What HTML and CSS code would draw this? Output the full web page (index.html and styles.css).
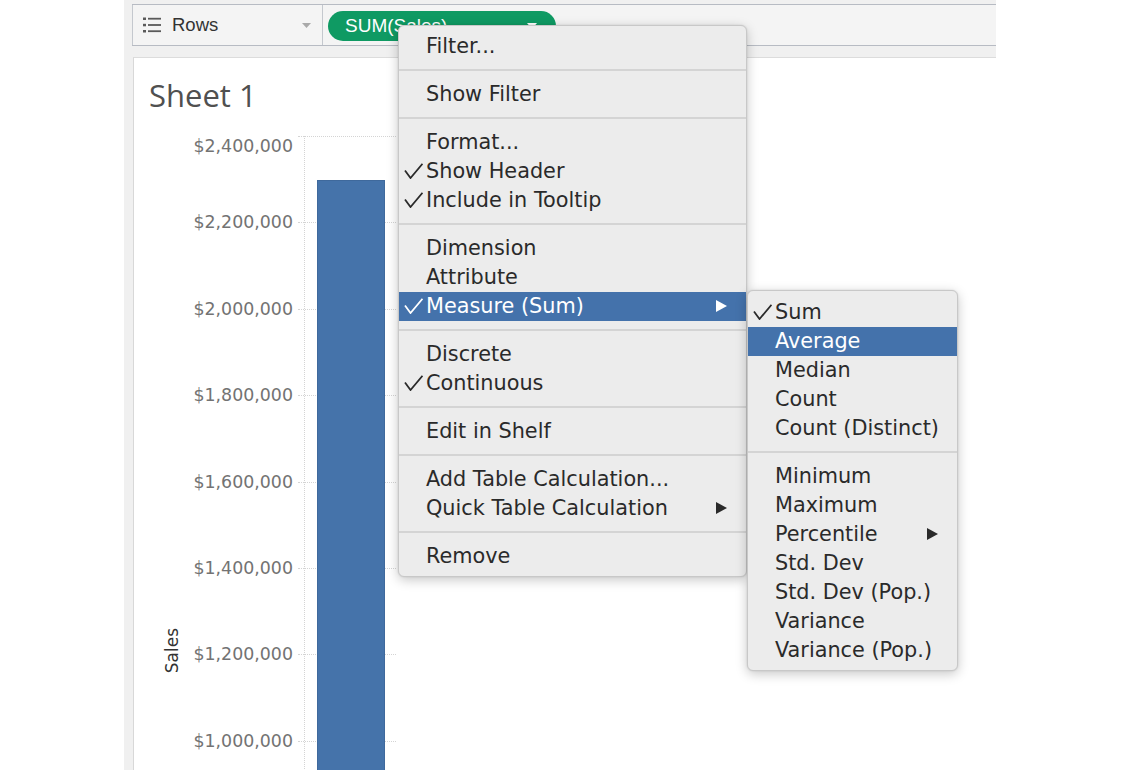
FILE: index.html
```html
<!DOCTYPE html>
<html lang="en">
<head>
<meta charset="utf-8">
<title>Sheet 1</title>
<link rel="stylesheet" href="styles.css">
</head>
<body>
<div class="app">
  <div class="shelf-row">
    <div class="shelf-label">
      <svg class="rows-icon" width="18" height="16" viewBox="0 0 18 16">
        <rect x="0" y="0.5" width="3" height="2.5"/><rect x="5" y="0.8" width="13" height="1.8"/>
        <rect x="0" y="6.8" width="3" height="2.5"/><rect x="5" y="7.1" width="13" height="1.8"/>
        <rect x="0" y="13" width="3" height="2.5"/><rect x="5" y="13.3" width="13" height="1.8"/>
      </svg>
      <span class="shelf-name">Rows</span>
      <svg class="caret" width="9" height="5" viewBox="0 0 9 5"><path d="M0 0H9L4.5 5Z"/></svg>
    </div>
    <div class="shelf-pills">
      <div class="pill">
        <span>SUM(Sales)</span>
        <svg class="pill-caret" width="10" height="6" viewBox="0 0 10 6"><path d="M0 0H10L5 6Z"/></svg>
      </div>
    </div>
  </div>
  <div class="sheet">
    <h1 class="sheet-title">Sheet 1</h1>
    <div class="chart">
      <div class="axis-title"><span>Sales</span></div>
      <div class="axis-labels">
        <div class="tick first"><span>$2,400,000</span></div>
        <div class="tick"><span>$2,200,000</span></div>
        <div class="tick"><span>$2,000,000</span></div>
        <div class="tick"><span>$1,800,000</span></div>
        <div class="tick"><span>$1,600,000</span></div>
        <div class="tick"><span>$1,400,000</span></div>
        <div class="tick"><span>$1,200,000</span></div>
        <div class="tick"><span>$1,000,000</span></div>
      </div>
      <div class="tick-gap"></div>
      <div class="plot">
        <div class="grid-lines">
          <div class="gl"></div><div class="gl"></div><div class="gl"></div><div class="gl"></div>
          <div class="gl"></div><div class="gl"></div><div class="gl"></div><div class="gl"></div>
        </div>
        <div class="bars">
          <div class="bar" style="margin-top:43.5px;height:993px"></div>
        </div>
      </div>
    </div>
  </div>
</div>

<div class="menu main-menu">
  <div class="item">Filter...</div>
  <div class="sep"></div>
  <div class="item">Show Filter</div>
  <div class="sep"></div>
  <div class="item">Format...</div>
  <div class="item"><svg class="check" width="19" height="16" viewBox="0 0 19 16"><path d="M1 7.5L6.5 15L18.5 0.8"/></svg>Show Header</div>
  <div class="item"><svg class="check" width="19" height="16" viewBox="0 0 19 16"><path d="M1 7.5L6.5 15L18.5 0.8"/></svg>Include in Tooltip</div>
  <div class="sep"></div>
  <div class="item">Dimension</div>
  <div class="item">Attribute</div>
  <div class="item active"><svg class="check" width="19" height="16" viewBox="0 0 19 16"><path d="M1 7.5L6.5 15L18.5 0.8"/></svg>Measure (Sum)<svg class="arrow" width="11" height="12" viewBox="0 0 11 12"><path d="M0 0L11 6L0 12Z"/></svg></div>
  <div class="sep"></div>
  <div class="item">Discrete</div>
  <div class="item"><svg class="check" width="19" height="16" viewBox="0 0 19 16"><path d="M1 7.5L6.5 15L18.5 0.8"/></svg>Continuous</div>
  <div class="sep"></div>
  <div class="item">Edit in Shelf</div>
  <div class="sep"></div>
  <div class="item">Add Table Calculation...</div>
  <div class="item">Quick Table Calculation<svg class="arrow" width="11" height="12" viewBox="0 0 11 12"><path d="M0 0L11 6L0 12Z"/></svg></div>
  <div class="sep"></div>
  <div class="item">Remove</div>
</div>

<div class="menu sub-menu">
  <div class="item"><svg class="check" width="19" height="16" viewBox="0 0 19 16"><path d="M1 7.5L6.5 15L18.5 0.8"/></svg>Sum</div>
  <div class="item active">Average</div>
  <div class="item">Median</div>
  <div class="item">Count</div>
  <div class="item">Count (Distinct)</div>
  <div class="sep"></div>
  <div class="item">Minimum</div>
  <div class="item">Maximum</div>
  <div class="item">Percentile<svg class="arrow" width="11" height="12" viewBox="0 0 11 12"><path d="M0 0L11 6L0 12Z"/></svg></div>
  <div class="item">Std. Dev</div>
  <div class="item">Std. Dev (Pop.)</div>
  <div class="item">Variance</div>
  <div class="item">Variance (Pop.)</div>
</div>
</body>
</html>
```

FILE: styles.css
```css
html, body {
  margin: 0;
  padding: 0;
}
body {
  background: #ffffff;
  width: 1125px;
  height: 774px;
  overflow: hidden;
  position: relative;
  font-family: "Liberation Sans", Arial, sans-serif;
}

.app {
  margin-left: 124px;
  width: 872px;
  height: 770px;
  background: #f0f0f0;
  display: flex;
  flex-direction: column;
  overflow: hidden;
}

/* ---------- shelf ---------- */
.shelf-row {
  margin: 4px 0 0 8px;
  height: 40px;
  border-top: 1px solid #b7bbc3;
  border-bottom: 1px solid #b7bbc3;
  background: #f4f4f4;
  display: flex;
  flex-shrink: 0;
}
.shelf-label {
  width: 191px;
  box-sizing: border-box;
  border-left: 1px solid #c4c8ce;
  border-right: 1px solid #c4c8ce;
  display: flex;
  align-items: center;
  padding-left: 10px;
  padding-right: 11px;
}
.rows-icon {
  fill: #5a5a5a;
  margin-right: 11px;
  flex-shrink: 0;
}
.shelf-name {
  flex: 1;
  font-size: 18.5px;
  color: #333333;
}
.caret {
  fill: #a9a9a9;
}
.shelf-pills {
  padding: 6px 0 0 5px;
}
.pill {
  width: 228px;
  height: 30px;
  box-sizing: border-box;
  border-radius: 15px;
  background: #0f9a63;
  color: #ffffff;
  font-size: 19px;
  display: flex;
  align-items: center;
  justify-content: space-between;
  padding: 0 19px 0 17px;
}
.pill-caret {
  fill: #ffffff;
}

/* ---------- sheet ---------- */
.sheet {
  margin: 11px 0 0 9px;
  flex: 1;
  min-height: 0;
  overflow: hidden;
  background: #ffffff;
  border-left: 1px solid #d8d8d8;
  border-top: 1px solid #dcdcdc;
}
.sheet-title {
  margin: 19px 0 0 15px;
  font-family: "Open Sans", sans-serif;
  font-weight: 400;
  font-size: 31px;
  line-height: 36px;
  color: #505050;
}
.chart {
  margin-top: 23px;
  display: grid;
  grid-template-columns: 49px 110px 5px 98px;
  align-items: start;
}
.axis-title {
  padding: 492px 0 0 28px;
}
.axis-title span {
  display: block;
  writing-mode: vertical-rl;
  transform: rotate(180deg);
  font-family: "DejaVu Sans", sans-serif;
  font-size: 17px;
  line-height: 20px;
  color: #333333;
}
.axis-labels {
  display: flex;
  flex-direction: column;
}
.tick {
  display: flow-root;
  height: 86.4px;
  text-align: right;
}
.tick span {
  display: block;
  margin-top: -11px;
  line-height: 22px;
  font-family: "DejaVu Sans", sans-serif;
  font-size: 17.4px;
  color: #737373;
  white-space: nowrap;
}
.tick.first span {
  margin-top: -1px;
}
.plot {
  display: grid;
}
.grid-lines, .bars {
  grid-area: 1 / 1;
}
.gl {
  height: 86.4px;
  box-sizing: border-box;
  border-top: 1px dotted #d4d4d4;
}
.bars {
  margin-left: 6px;
  border-left: 1px dotted #d4d4d4;
  padding-left: 12px;
}
.bar {
  width: 68px;
  box-sizing: border-box;
  background: #4573aa;
  border: 1px solid #3f699c;
}

/* ---------- menus ---------- */
.menu {
  position: absolute;
  box-sizing: border-box;
  background: #ececec;
  border: 1px solid #c8c8c8;
  border-radius: 6px;
  box-shadow: 0 3px 12px rgba(0, 0, 0, 0.22), 0 0 2px rgba(0, 0, 0, 0.12);
  font-family: "DejaVu Sans", sans-serif;
  font-size: 20.8px;
  color: #2a2a2a;
}
.main-menu {
  left: 398px;
  top: 25px;
  width: 349px;
  padding: 5.5px 0;
  z-index: 2;
}
.sub-menu {
  left: 747px;
  top: 290px;
  width: 211px;
  padding: 6.5px 0 5.5px;
  z-index: 3;
}
.item {
  position: relative;
  height: 29px;
  line-height: 29px;
  padding-left: 27px;
  white-space: nowrap;
}
.item.active {
  background: #4472ab;
  color: #ffffff;
}
.check {
  position: absolute;
  left: 5px;
  top: 6.5px;
  fill: none;
  stroke: currentColor;
  stroke-width: 1.8;
}
.arrow {
  position: absolute;
  right: 19px;
  top: 8.5px;
  fill: currentColor;
}
.sep {
  height: 2px;
  margin: 8.5px 0;
  background: #d4d4d4;
}
```
